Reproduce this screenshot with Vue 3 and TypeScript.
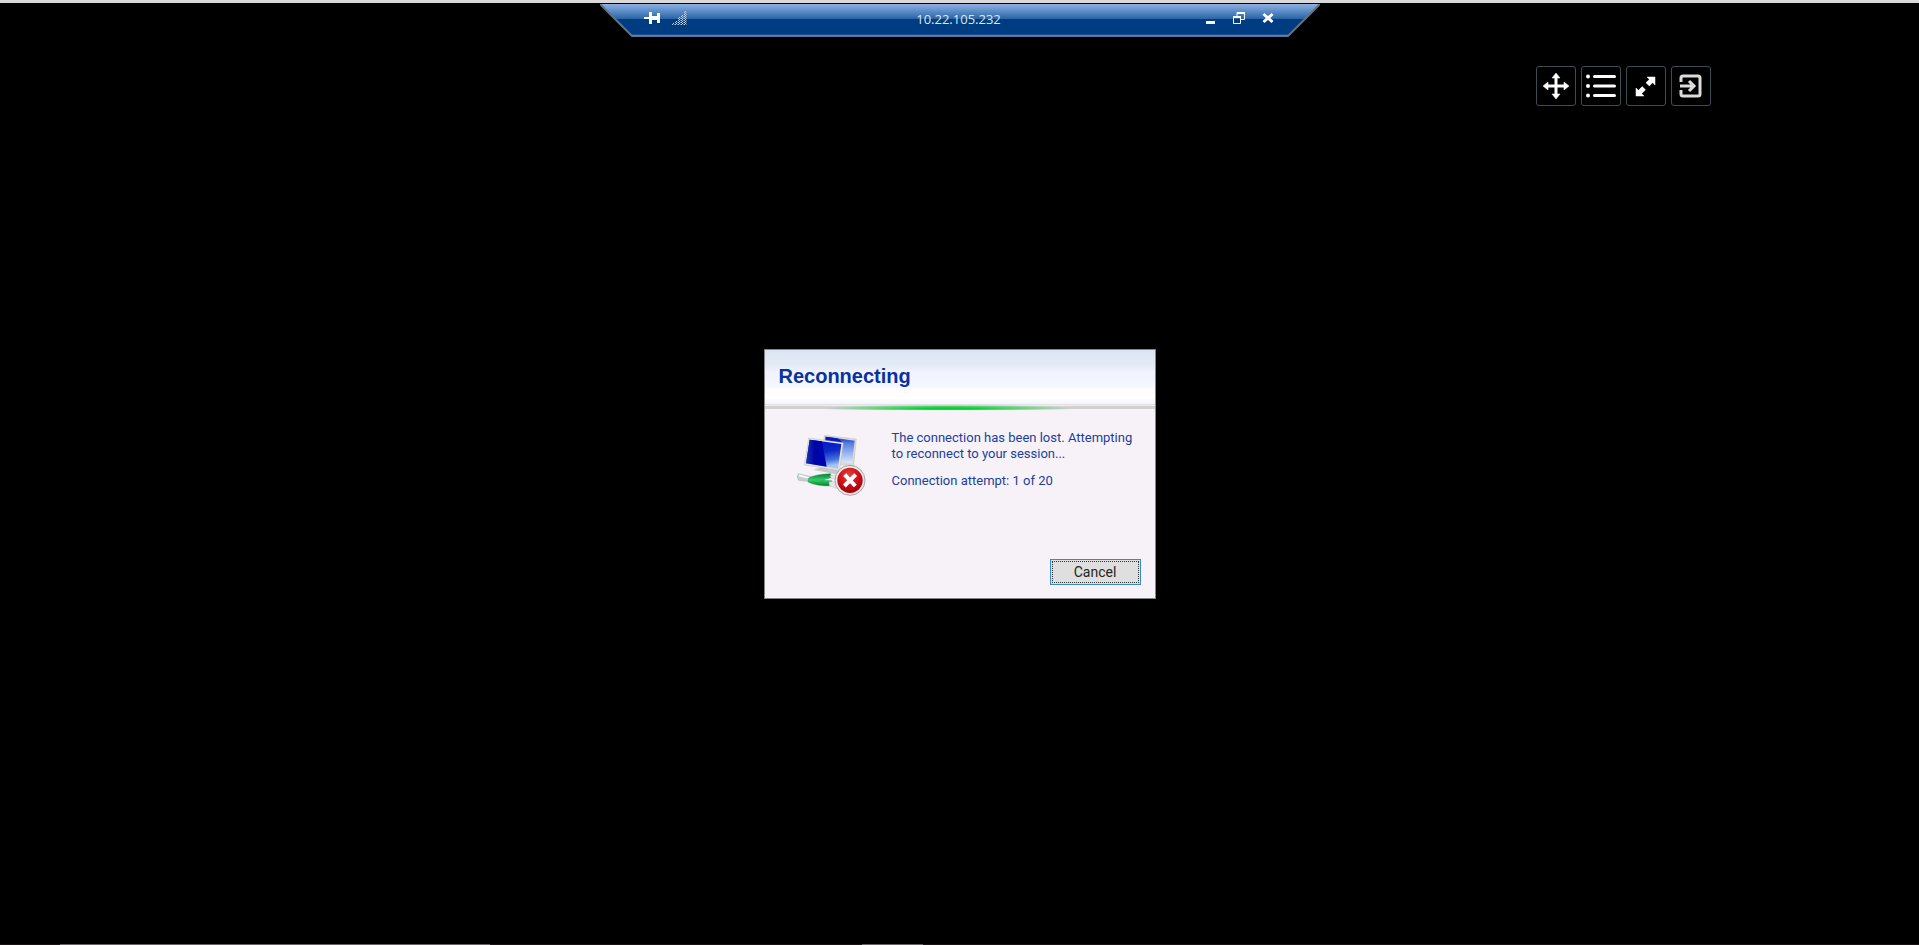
<script setup lang="ts">
import { ref } from 'vue'

const host = ref('10.22.105.232')
const attempt = ref(1)
const maxAttempts = 20

const signalBars = [
  { x: 0, dots: 1 },
  { x: 3, dots: 2 },
  { x: 6, dots: 4 },
  { x: 9, dots: 5 },
  { x: 12, dots: 7 },
]
</script>

<template>
  <div class="desktop">
    <div class="window-edge"></div>

    <header class="connection-bar">
      <svg class="bar-shape" viewBox="0 0 720 34" preserveAspectRatio="none" aria-hidden="true">
        <defs>
          <linearGradient id="barFill" x1="0" y1="0" x2="0" y2="1">
            <stop offset="0" stop-color="#8db0e0" />
            <stop offset="0.2" stop-color="#6090cb" />
            <stop offset="0.44" stop-color="#2c66a6" />
            <stop offset="0.44" stop-color="#003c80" />
            <stop offset="1" stop-color="#003c84" />
          </linearGradient>
        </defs>
        <path d="M0 0H720L688 33H32Z" fill="url(#barFill)" />
        <path d="M0 0L32 32H688L720 0" fill="none" stroke="#66717f" stroke-width="2" />
        <path d="M32 31.5H688" stroke="#4f80c2" stroke-width="1.5" />
      </svg>
      <div class="bar-group">
        <button class="bar-button" type="button" aria-label="Pin the connection bar">
          <svg width="16" height="14" viewBox="0 0 16 14">
            <path d="M0 7H6" stroke="#fff" stroke-width="2" />
            <path d="M6.500 1V13M14.500 2V12" stroke="#fff" stroke-width="3" />
            <path d="M6 7H15" stroke="#fff" stroke-width="4" />
          </svg>
        </button>
        <button class="bar-button" type="button" aria-label="Connection quality">
          <svg width="16" height="16" viewBox="0 0 16 16">
            <g v-for="bar in signalBars" :key="bar.x" fill="#c3d2ea">
              <template v-for="n in bar.dots" :key="n">
                <rect :x="bar.x" :y="16 - n * 2" width="1" height="1" />
                <rect :x="bar.x + 1" :y="15 - n * 2" width="1" height="1" />
                <rect :x="bar.x + 2" :y="16 - n * 2" width="1" height="1" fill-opacity="0.5" />
              </template>
            </g>
          </svg>
        </button>
      </div>
      <span class="host">{{ host }}</span>
      <div class="bar-group window-controls">
        <button class="bar-button" type="button" aria-label="Minimize">
          <svg width="12" height="14" viewBox="0 0 12 14"><path d="M2 11.5H11" stroke="#fff" stroke-width="3" /></svg>
        </button>
        <button class="bar-button" type="button" aria-label="Restore">
          <svg width="12" height="14" viewBox="0 0 12 14" fill="none" stroke="#fff">
            <path d="M4 5V1.5H11.5V8.5H8" />
            <path d="M4 2H12" stroke-width="2" />
            <path d="M0.5 5.5H7.5V12.5H0.5Z" />
            <path d="M0 6H8" stroke-width="2" />
          </svg>
        </button>
        <button class="bar-button" type="button" aria-label="Close">
          <svg width="12" height="14" viewBox="0 0 12 14"><path d="M1.5 3L10.5 11M10.5 3L1.5 11" stroke="#fff" stroke-width="3" /></svg>
        </button>
      </div>
    </header>

    <nav class="tools" aria-label="Session tools">
      <button class="tool" type="button" aria-label="Move">
        <svg width="38" height="38" viewBox="1 1 38 38">
          <path d="M20 10V30M10 20H30" stroke="#fff" stroke-width="3" />
          <path d="M20 7L24 12H16ZM20 33L24 28H16ZM7 20L12 16V24ZM33 20L28 16V24Z" fill="#fff" stroke="#fff" stroke-width="0.500" />
        </svg>
      </button>
      <button class="tool" type="button" aria-label="Menu">
        <svg width="38" height="38" viewBox="1 1 38 38">
          <path d="M13.500 10.500H33.500M13.500 20H33.500M13.500 29.500H33.500" stroke="#fff" stroke-width="3" stroke-linecap="round" />
          <g fill="#fff"><circle cx="7" cy="10.500" r="2" /><circle cx="7" cy="20" r="2" /><circle cx="7" cy="29.500" r="2" /></g>
        </svg>
      </button>
      <button class="tool" type="button" aria-label="Full screen">
        <svg width="38" height="38" viewBox="1 1 38 38">
          <path d="M21.500 18.500L27 13M18 22L13 27" stroke="#fff" stroke-width="5" />
          <path d="M21 11H29V19ZM10 22V30H18Z" fill="#fff" stroke="#fff" stroke-width="0.500" stroke-linejoin="round" />
        </svg>
      </button>
      <button class="tool" type="button" aria-label="Disconnect">
        <svg width="38" height="38" viewBox="1 1 38 38" fill="none" stroke="#dcdcdc" stroke-width="3">
          <path d="M10 16V12Q10 10 12 10H27Q29 10 29 12V28Q29 30 27 30H12Q10 30 10 28V24" />
          <path d="M9 20H23M18 15L23 20L18 25" />
        </svg>
      </button>
    </nav>

    <main class="stage">
      <section class="dialog" role="dialog" aria-labelledby="dialog-title">
        <div class="dialog-head">
          <h1 id="dialog-title">Reconnecting</h1>
        </div>
        <div class="progress"></div>
        <div class="dialog-body">
          <svg class="network" width="72" height="64" viewBox="45 38 216 192" aria-hidden="true">
            <defs>
              <linearGradient id="glassBack" x1="0" y1="0" x2="0" y2="1">
                <stop offset="0" stop-color="#1029c8" />
                <stop offset="0.250" stop-color="#557ee0" />
                <stop offset="1" stop-color="#dcebff" />
              </linearGradient>
              <linearGradient id="glassDark" x1="0" y1="0" x2="1" y2="0">
                <stop offset="0" stop-color="#1c35b8" />
                <stop offset="0.400" stop-color="#0006a4" />
                <stop offset="1" stop-color="#0003b4" />
              </linearGradient>
              <linearGradient id="glassLight" x1="0" y1="0" x2="0.200" y2="1">
                <stop offset="0" stop-color="#0010c4" />
                <stop offset="0.500" stop-color="#0d28c8" />
                <stop offset="0.800" stop-color="#456fdc" />
                <stop offset="1" stop-color="#a5c7f6" />
              </linearGradient>
              <radialGradient id="error" cx="0.450" cy="0.300" r="0.700">
                <stop offset="0" stop-color="#e2463f" />
                <stop offset="0.550" stop-color="#cc1119" />
                <stop offset="1" stop-color="#a4000b" />
              </radialGradient>
              <linearGradient id="plug" x1="0" y1="0" x2="0" y2="1">
                <stop offset="0" stop-color="#097b35" />
                <stop offset="0.500" stop-color="#35cf66" />
                <stop offset="1" stop-color="#008331" />
              </linearGradient>
            </defs>
            <path d="M133 45L229 56L221 137L124 128Z" fill="#ddd8d2" stroke="#b5b0aa" />
            <path d="M137 49L224 61L216 129L128 120Z" fill="url(#glassBack)" />
            <path d="M137 49L172 54L188 66L137 62Z" fill="#0719c0" />
            <path d="M100 148L128 140L180 151L166 162Z" fill="#c6cac9" />
            <path d="M86 53L190 67L179 151L73 134Z" fill="#e8e4df" stroke="#aaa7a4" />
            <path d="M89 58L184 71L174 145L78 129Z" fill="url(#glassLight)" />
            <path d="M89 58L126 63L140 139L78 129Z" fill="url(#glassDark)" />
            <path d="M55 160Q48 171 56 180L91 184L93 169Z" fill="#c3d0cf" stroke="#8a9b99" />
            <path d="M57 165L88 173" stroke="#fff" stroke-width="5" />
            <path d="M86 173Q103 162 151 160L157 171L127 180L155 181L153 197Q107 197 84 185Z" fill="url(#plug)" stroke="#087e38" />
            <path d="M150 164L168 167V176L154 175ZM147 184H172V205L148 196Z" fill="#e4e6e6" stroke="#aaa" />
            <circle cx="210" cy="180" r="45" fill="#ebe8e7" stroke="#858282" stroke-width="2" />
            <circle cx="210" cy="180" r="38" fill="url(#error)" />
            <path d="M194 163L226 197M227 163L193 197" stroke="#fff" stroke-width="12" />
          </svg>
          <div class="message">
            <p>The connection has been lost. Attempting<br />to reconnect to your session...</p>
            <p>Connection attempt: {{ attempt }} of {{ maxAttempts }}</p>
          </div>
        </div>
        <footer class="actions">
          <button class="cancel" type="button"><span>Cancel</span></button>
        </footer>
      </section>
    </main>

    <div class="bottom-edge"></div>
  </div>
</template>

<style>
body {
  background: #000;
}
</style>

<style scoped>
.desktop {
  position: relative;
  box-sizing: border-box;
  display: flex;
  flex-direction: column;
  align-items: center;
  min-height: 100vh;
  overflow: hidden;
  background: #000;
  font-family: "Liberation Sans", Arial, sans-serif;
}

.window-edge {
  width: 100%;
  height: 3px;
  margin-bottom: 1px;
  background: #d9d9d9;
}

.connection-bar {
  position: relative;
  z-index: 1;
  box-sizing: border-box;
  display: grid;
  grid-template-columns: 1fr auto 1fr;
  align-items: center;
  width: 720px;
  max-width: 100%;
  height: 34px;
  padding: 0 46px 6px 44px;
}

.bar-shape {
  position: absolute;
  inset: 0;
  width: 100%;
  height: 100%;
}

.bar-group {
  position: relative;
  display: flex;
  align-items: center;
  gap: 12px;
}

.window-controls {
  justify-content: flex-end;
  gap: 17px;
}

.bar-button {
  display: flex;
  padding: 0;
  border: 0;
  background: none;
}

.window-controls .bar-button {
  width: 12px;
}

.host {
  position: relative;
  padding-top: 2px;
  color: #dfe7f2;
  font: 13px/20px "Open Sans", "Noto Sans", sans-serif;
}

.tools {
  position: absolute;
  z-index: 1;
  top: 66px;
  right: 208px;
  display: flex;
  gap: 5px;
}

.tool {
  box-sizing: border-box;
  display: flex;
  width: 40px;
  height: 40px;
  padding: 0;
  border: 1px solid #3d4e53;
  border-radius: 3px;
  background: #000;
}

.stage {
  position: absolute;
  inset: 2px 0 0;
  display: grid;
  place-items: center;
}

.dialog {
  box-sizing: border-box;
  display: flex;
  flex-direction: column;
  width: 392px;
  min-height: 250px;
  border: 1px solid #858585;
  background: #f6f2f7;
  color: #1c3f9c;
}

.dialog-head {
  height: 54px;
  background: linear-gradient(#dae4f4, #e4ecf5 30%, #f0f2ff 40%, #f5f8ff 68%, #fffaff 72%, #fff 88%, #f3f5fd);
}

h1 {
  margin: 0;
  padding: 14px 14px 0;
  color: #0732a0;
  font-size: 20px;
  line-height: 24px;
}

.progress {
  height: 6px;
  background:
    radial-gradient(ellipse 125px 4px at 47% 75%, #00d52d 20%, rgba(30, 215, 70, 0.6) 60%, transparent),
    linear-gradient(#e3e1e3 1px, #f0edf0 1px 2px, #d2d0d2 2px 5px, #f6f2f7 5px);
}

.dialog-body {
  display: flex;
  gap: 25px;
  padding: 20px 0 0 30px;
}

.network {
  margin-top: 3px;
}

.message {
  font: 13px/16px Roboto, "Liberation Sans", sans-serif;
  white-space: nowrap;
}

p {
  margin: 0 0 11px;
}

.actions {
  display: flex;
  justify-content: flex-end;
  margin-top: auto;
  padding: 0 14px 13px;
}

.cancel {
  box-sizing: border-box;
  width: 91px;
  height: 26px;
  padding: 1px;
  border: 1px solid #3b8ac8;
  background: #dfdfdf;
  color: #242424;
  font: 14px/20px Roboto, "Liberation Sans", sans-serif;
}

.cancel span {
  display: block;
  border: 1px dotted #333;
}

.bottom-edge {
  width: 100%;
  height: 1px;
  margin-top: auto;
  background: linear-gradient(90deg, #1b1013 60px, #666265 60px 490px, #1b1013 490px 862px, #666265 862px 923px, #1b1013 923px);
}
</style>
